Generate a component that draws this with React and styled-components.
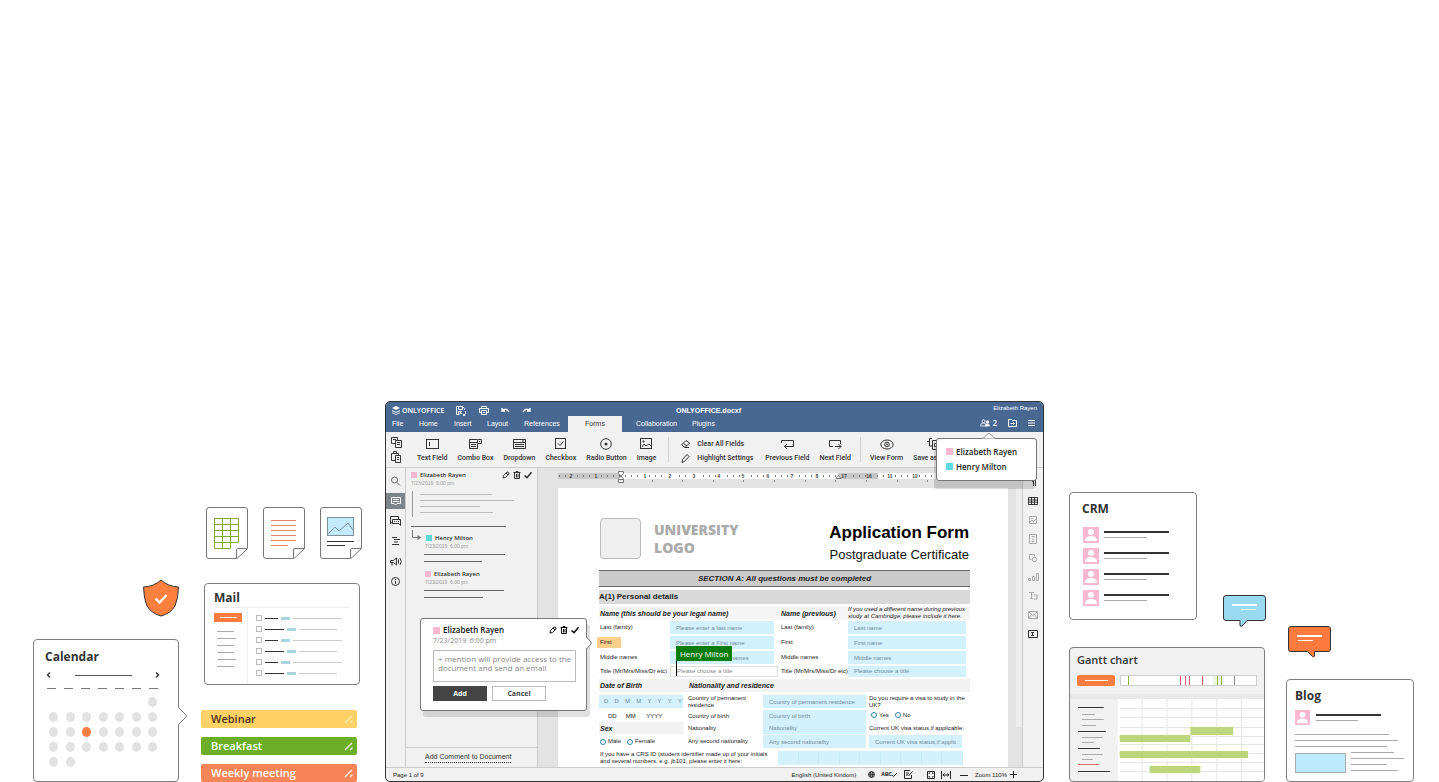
import React from "react";
import styled, { createGlobalStyle } from "styled-components";

const ui = `"Open Sans", "Noto Sans", sans-serif`;
const office = `"Liberation Sans", Arial, sans-serif`;
const toolFont = `Roboto, "Liberation Sans", sans-serif`;

const GlobalStyle = createGlobalStyle`
  * { box-sizing: border-box; }
  body { margin: 0; background: #fff; font-family: ${ui}; color: #333; }
  button, input, select { font: inherit; color: inherit; margin: 0; padding: 0; border: 0; border-radius: 0; background: none; }
  button { cursor: pointer; }
  a { color: inherit; text-decoration: none; }
  svg { display: block; flex: none; overflow: visible; }
  h2, h3, p { margin: 0; }
`;

/* ---------- shared pieces ---------- */

const Page = styled.main`
  min-height: 100vh;
  display: flex;
  align-items: flex-end;
  padding: 0 25px 0 33px;
  overflow: hidden;
`;

const Column = styled.div`
  flex: none;
  display: flex;
  flex-direction: column;
  width: ${(p) => p.$width}px;
  margin-right: ${(p) => p.$gap || 0}px;
`;

const Card = styled.section`
  position: relative;
  background: #fff;
  border: 1px solid #7f7f7f;
  border-radius: 4px;
`;

const CardTitle = styled.h2`
  font: 700 12px/16px ${ui};
  color: #333;
`;

const Line = styled.span`
  display: block;
  flex: none;
  width: ${(p) => p.$w}px;
  height: ${(p) => p.$h || 1}px;
  background: ${(p) => p.$c || "#aaa"};
`;

const Swatch = styled.span`
  flex: none;
  width: ${(p) => p.$size || 6}px;
  height: ${(p) => p.$size || 6}px;
  background: ${(p) => p.$c};
`;

const pink = "#f9b8d0";
const teal = "#5fd9de";

function Icon({ w = 14, h = 14, sw = 1, fill = "none", children }) {
  return (
    <svg width={w} height={h} viewBox={`0 0 ${w} ${h}`} fill={fill} stroke="currentColor" strokeWidth={sw} aria-hidden="true">
      {children}
    </svg>
  );
}

const EditIcon = () => (
  <Icon w={8} h={8}><path d="M1 7l.5-2.5L5 1q2-.5 2 2L3.500 6.500z M4 2l2 2" /></Icon>
);
const TrashIcon = () => (
  <Icon w={8} h={8}><path d="M.5 1.500h7M3 1V.500h2V1M1.500 2v5.500h5V2M3.500 3v3.500M5 3v3.500" /></Icon>
);
const CheckIcon = () => (
  <Icon w={8} h={8} sw={1.6}><path d="M.5 4.500L3 6.700 7.500 1.200" /></Icon>
);

const IconButton = styled.button`
  display: flex;
  align-items: center;
  justify-content: center;
`;

/* ---------- calendar ---------- */

const ShieldWrap = styled.div`
  align-self: flex-end;
  margin-bottom: 22px;
`;

const CalendarCard = styled(Card)`
  height: 143px;
  padding: 9px 17px 0 11px;
`;

const MonthNav = styled.div`
  display: flex;
  align-items: center;
  justify-content: space-between;
  height: 10px;
  margin-top: 5px;
`;

const WeekDays = styled.div`
  display: flex;
  justify-content: space-between;
  margin: 8px 3px 8px 2px;
`;

const Days = styled.div`
  display: grid;
  grid-template-columns: repeat(7, 9px);
  justify-content: space-between;
  row-gap: 5px;
  margin: 0 4px 0 4px;
`;

const Day = styled.span`
  height: 10px;
  border-radius: 50%;
  background: ${(p) => (p.$active ? "#f47d42" : p.$empty ? "none" : "#e2e2e2")};
`;

const CalendarPointer = styled.svg`
  position: absolute;
  right: -9px;
  top: 66px;
`;

function Calendar() {
  return (
    <Column $width={146} $gap={22}>
      <ShieldWrap>
        <svg width="36" height="38" viewBox="0 0 36 38">
          <path d="M18 1q7 6.500 17.500 7-.2 11-3.500 19-4.500 7.500-14 10-9.500-2.500-14-10Q.7 19 .5 8 11 7.500 18 1z" fill="#ff7f3f" stroke="#333" />
          <path d="M12.500 19.500l4 4 7-7.500" fill="none" stroke="#fff" strokeWidth="2.400" />
        </svg>
      </ShieldWrap>
      <CalendarCard>
        <CardTitle>Calendar</CardTitle>
        <MonthNav>
          <IconButton aria-label="Previous month"><Icon w={7} h={8} sw={1.4}><path d="M5 1.500L2.500 4 5 6.500" /></Icon></IconButton>
          <Line $w={57} $c="#555" />
          <IconButton aria-label="Next month"><Icon w={7} h={8} sw={1.4}><path d="M2 1.500L4.500 4 2 6.500" /></Icon></IconButton>
        </MonthNav>
        <WeekDays>{[0, 1, 2, 3, 4, 5, 6].map((d) => <Line key={d} $w={9} $c="#777" />)}</WeekDays>
        <Days>
          {Array.from({ length: 30 }, (_, i) => <Day key={i} $empty={i < 6} $active={i === 16} />)}
        </Days>
        <CalendarPointer width="10" height="20" viewBox="0 0 10 20">
          <path d="M1 1L9 9q1 1 0 2L1 19" fill="#fff" stroke="#7f7f7f" />
          <path d="M.5 2v16" stroke="#fff" strokeWidth="2" />
        </CalendarPointer>
      </CalendarCard>
    </Column>
  );
}

/* ---------- files, mail, events ---------- */

const Files = styled.div`
  display: flex;
  gap: 15px;
  padding-left: 5px;
  margin-bottom: 24px;
`;

const MailCard = styled(Card)`
  margin: 0 0 25px 3px;
  height: 102px;
  padding: 6px 9px 0;
`;

const MailBody = styled.div`
  display: flex;
  border-top: 1px solid #eee;
  margin-top: 1px;
`;

const Folders = styled.div`
  display: flex;
  flex-direction: column;
  gap: 6px;
  width: 34px;
  height: 76px;
  padding-top: 5px;
  border-right: 1px solid #eee;
`;

const FolderLine = styled(Line)`
  margin-left: 3px;
`;

const Compose = styled.button`
  display: flex;
  align-items: center;
  justify-content: center;
  width: 28px;
  height: 9px;
  margin-bottom: 3px;
  background: #ff7a3d;
`;

const Messages = styled.div`
  display: flex;
  flex-direction: column;
  gap: 5px;
  padding: 7px 0 0 8px;
`;

const Message = styled.div`
  display: flex;
  align-items: center;
  gap: 3px;
`;

const MailCheck = styled.input`
  appearance: none;
  width: 6px;
  height: 6px;
  border: 1px solid #bbb;
`;

const Event = styled.div`
  width: 156px;
  height: 18px;
  margin-bottom: ${(p) => (p.$last ? 0 : 9)}px;
  padding: 0 3px 0 10px;
  border-radius: 2px;
  display: flex;
  align-items: center;
  justify-content: space-between;
  font: 600 11px/18px ${ui};
  background: ${(p) => p.$bg};
  color: ${(p) => p.$color || "#fff"};
`;

function FileSheet({ children }) {
  return (
    <svg width="42" height="52" viewBox="0 0 42 52" fill="none">
      <path d="M30.500 51.500H3q-2.500 0-2.500-2.500V3Q.5.5 3 .5h36q2.500 0 2.500 2.500v38.500l-10.500 10zM30.500 51V43q0-1.500 1.500-1.500h9.500" fill="#fff" stroke="#777" />
      {children}
    </svg>
  );
}

const messages = [
  [13, 9, 49], [19, 9, 38], [13, 9, 49], [19, 9, 38], [13, 9, 49], [19, 9, 38],
];

function Grip({ faint }) {
  return (
    <Icon w={10} h={10}>
      <path d="M1 9l7-7M6 9l2.500-2.500" stroke={faint ? "#ffecae" : "#fff"} strokeWidth="1.200" />
    </Icon>
  );
}

function MailColumn() {
  return (
    <Column $width={159} $gap={25}>
      <Files>
        <FileSheet>
          <path d="M8.500 11.500h24v24h-8v6h-16zM8.500 17.500h24M8.500 23.500h24M8.500 29.500h24M8.500 35.500h16M16.500 11.500v30M24.500 11.500v24" stroke="#7fae2f" />
        </FileSheet>
        <FileSheet>
          <path d="M8 13.500h25M8 18.500h25M8 23.500h25M8 28.500h25M8 33.500h25M8 38.500h17" stroke="#ea845c" />
        </FileSheet>
        <FileSheet>
          <rect x="7.500" y="10.500" width="26" height="18" fill="#c2eafb" stroke="#7f9098" />
          <path d="M8 27l7-7 4 4 9-8 5 7" stroke="#7f9098" />
          <path d="M7 34.500h27M7 38.500h18" stroke="#333" />
        </FileSheet>
      </Files>
      <MailCard>
        <CardTitle>Mail</CardTitle>
        <MailBody>
          <Folders>
            <Compose aria-label="Compose"><Line $w={17} $c="#fff" /></Compose>
            {[17, 19, 17, 17, 19, 17].map((w, i) => <FolderLine key={i} $w={w} />)}
          </Folders>
          <Messages>
            {messages.map(([a, b, c], i) => (
              <Message key={i}>
                <MailCheck type="checkbox" aria-label={`Select message ${i + 1}`} />
                <Line $w={a} $c="#333" />
                <Line $w={b} $h={3} $c="#a9d5e1" />
                <Line $w={c} $c="#ccc" />
              </Message>
            ))}
          </Messages>
        </MailBody>
      </MailCard>
      <Event $bg="#ffd166" $color="#50331d">Webinar<Grip faint /></Event>
      <Event $bg="#6cae25">Breakfast<Grip /></Event>
      <Event $bg="#f88557" $last>Weekly meeting<Grip /></Event>
    </Column>
  );
}

/* ---------- editor frame ---------- */

const EditorFrame = styled.section`
  position: relative;
  flex: 1;
  min-width: 0;
  margin-right: 25px;
  border: 1px solid #333;
  border-radius: 5px;
  background: #f1f1f1;
  font: 400 7px/10px ${office};
  color: #333;
`;

const Header = styled.header`
  background: #486892;
  border-radius: 4px 4px 0 0;
  color: #fff;
  height: 30px;
`;

const TitleRow = styled.div`
  display: grid;
  grid-template-columns: 1fr auto 1fr;
  align-items: center;
  height: 14px;
  padding: 3px 6px 0;
`;

const TitleLeft = styled.div`
  display: flex;
  align-items: center;
`;

const Brand = styled.strong`
  font: 600 7px/10px ${ui};
  margin: 0 12px 0 2px;
`;

const QuickButton = styled(IconButton)`
  height: 10px;
  margin-right: 12px;
`;

const FileName = styled.strong`
  font: 700 7px/10px ${office};
  padding-right: 12px;
`;

const UserName = styled.span`
  justify-self: end;
  align-self: start;
  font: 400 6px/7px ${office};
`;

const TabRow = styled.nav`
  display: flex;
  align-items: stretch;
  height: 16px;
  padding: 0 8px 0 6px;
`;

const Tab = styled.button`
  width: ${(p) => p.$w}px;
  text-align: left;
  line-height: 14px;
  padding-bottom: 1px;
  color: ${(p) => (p.$active ? "#333" : "#fff")};
  background: ${(p) => (p.$active ? "#f1f1f1" : "none")};
  ${(p) => p.$active && "text-align: center; margin-right: 14px;"}
`;

const TabActions = styled.div`
  display: flex;
  align-items: center;
  gap: 11px;
  margin-left: auto;
  padding-bottom: 2px;
`;

const Collaborators = styled.button`
  display: flex;
  align-items: center;
  gap: 2px;
  font: 600 8px/12px ${ui};
`;

const Toolbar = styled.div`
  display: flex;
  align-items: stretch;
  height: 36px;
  padding: 0 0 0 5px;
  border-bottom: 1px solid #cbcbcb;
  overflow: hidden;
`;

const ClipTools = styled.div`
  display: flex;
  flex: none;
  flex-direction: column;
  align-items: flex-start;
  gap: 3px;
  padding: 4px 0;
  width: 26px;
`;

const ToolGroup = styled.div`
  display: flex;
  gap: 10px;
  padding-top: 6px;
`;

const Tool = styled.button`
  display: flex;
  flex-direction: column;
  align-items: center;
  gap: 3px;
  height: 26px;
  white-space: nowrap;
  font: 500 7px/10px ${toolFont};
  color: #333;
`;

const ToolStack = styled.div`
  display: flex;
  flex-direction: column;
  gap: 4px;
  padding: 7px 12px 0 0;
`;

const StackTool = styled.button`
  display: flex;
  align-items: center;
  gap: 7px;
  height: 10px;
  white-space: nowrap;
  font: 500 7px/10px ${toolFont};
  color: #333;
`;

const ToolDivider = styled.span`
  flex: none;
  width: 1px;
  margin: 5px ${(p) => p.$m}px;
  background: #d4d4d4;
`;

const Workspace = styled.div`
  display: flex;
`;

/* ---------- comments ---------- */

const Rail = styled.nav`
  flex: none;
  width: ${(p) => (p.$right ? 21 : 20)}px;
  display: flex;
  flex-direction: column;
  padding-top: ${(p) => (p.$right ? 4 : 3)}px;
  border-${(p) => (p.$right ? "left" : "right")}: 1px solid #cbcbcb;
`;

const RailButton = styled(IconButton)`
  height: ${(p) => p.$h}px;
  color: ${(p) => (p.$active ? "#fff" : p.$muted ? "#aaa" : "#333")};
`;

const ActiveTile = styled.span`
  display: flex;
  align-items: center;
  justify-content: center;
  width: 100%;
  height: 16px;
  background: #7d8588;
`;

const Comments = styled.aside`
  flex: none;
  width: 132px;
  border-right: 1px solid #cbcbcb;
  display: flex;
  flex-direction: column;
  font-family: ${ui};
`;

const Thread = styled.div`
  padding: 2px 5px 0 5px;
`;

const Author = styled.div`
  display: flex;
  align-items: center;
  gap: 3px;
  font: 600 ${(p) => (p.$big ? 8 : 6)}px/10px ${ui};
  color: ${(p) => (p.$big ? "#111" : "#333")};
  margin-left: ${(p) => p.$indent || 0}px;
`;

const Stamp = styled.div`
  font: 400 5px/7px ${office};
  color: #999;
`;

const Actions = styled.span`
  display: flex;
  gap: 3px;
  margin-left: auto;
  margin-right: ${(p) => (p.$flush ? -4 : 0)}px;
`;

const Quote = styled.div`
  display: flex;
  flex-direction: column;
  gap: 5px;
  margin: 4px 0 9px 1px;
  padding: 3px 0 4px 7px;
  border-left: 1px solid #999;
`;

const Reply = styled.div`
  position: relative;
  display: flex;
  flex-direction: column;
  gap: 4px;
  margin: 6px 0 7px 13px;
`;

const ReplyLines = styled.div`
  display: flex;
  flex-direction: column;
  gap: 6px;
`;

const ReplyArrow = styled.svg`
  position: absolute;
  left: -13px;
  top: -4px;
`;

const ReplyHead = styled.div`
  padding-left: 1px;
`;

const CommentFooter = styled.div`
  margin-top: auto;
  height: 20px;
  padding: 4px 0 0 19px;
  border-top: 1px solid #cbcbcb;
`;

const AddLink = styled.a`
  display: block;
  width: fit-content;
  font: 400 7px/10px ${office};
  border-bottom: 1px dotted #333;
`;

const CommentPopup = styled.section`
  position: absolute;
  left: 34px;
  top: 216px;
  width: 167px;
  height: 93px;
  padding: 6px 11px 0 12px;
  background: #fff;
  border: 1px solid #777;
  border-radius: 3px;
  box-shadow: 3px 6px 0 rgba(0, 0, 0, 0.12);
  font: 400 7px/12px ${ui};
  color: #888;
`;

const PopupPointer = styled.svg`
  position: absolute;
  right: -6px;
  top: 17px;
`;

const MentionBox = styled.textarea`
  display: block;
  width: 143px;
  height: 32px;
  margin-top: 3px;
  padding: 3px 0 3px 4px;
  border: 1px solid #bbb;
  border-radius: 0;
  resize: none;
  overflow: hidden;
  font: 400 8px/9px ${ui};
  background: #fff;
  &::placeholder { color: #888; opacity: 1; }
`;

const PopupButtons = styled.div`
  display: flex;
  gap: 5px;
  margin-top: 4px;
`;

const PopupButton = styled.button`
  width: 54px;
  height: 15px;
  font: 700 7px/13px ${ui};
  border: 1px solid ${(p) => (p.$primary ? "#444" : "#bbb")};
  background: ${(p) => (p.$primary ? "#444" : "#fff")};
  color: ${(p) => (p.$primary ? "#fff" : "#444")};
`;

const UsersPopover = styled.div`
  position: absolute;
  right: 6px;
  top: 36px;
  width: 101px;
  height: 43px;
  padding: 5px 9px;
  background: #fff;
  border: 1px solid #777;
  border-radius: 3px;
  box-shadow: -2px 8px 0 rgba(0, 0, 0, 0.14);
`;

const UserItem = styled.div`
  display: flex;
  align-items: center;
  gap: 3px;
  height: 15px;
  font: 600 8px/15px ${ui};
  color: #222;
`;

const PopoverPointer = styled.svg`
  position: absolute;
  left: 46px;
  top: -6px;
`;

/* ---------- document ---------- */

const DocArea = styled.div`
  flex: 1;
  min-width: 0;
  background: #e3e3e3;
  display: grid;
  grid-template-columns: 20px minmax(0, 1fr) 8px 6px;
`;

const RulerBar = styled.div`
  grid-column: 2 / 4;
  height: 20px;
  padding-top: 4px;
  overflow: hidden;
`;

const Scrollbar = styled.div`
  grid-column: 4;
  grid-row: 2;
  background: #ededed;
  margin-bottom: 40px;
`;

const Sheet = styled.article`
  grid-column: 2;
  background: #fff;
  padding: 30px 38px 2px 41px;
  font: 400 6px/7px ${office};
  color: #222;
`;

const DocHead = styled.div`
  display: flex;
  align-items: flex-start;
  height: 41px;
  margin-bottom: 11px;
`;

const LogoBox = styled.div`
  width: 41px;
  height: 41px;
  margin: 0 13px 0 1px;
  background: #efefef;
  border: 1px solid #bbb;
  border-radius: 4px;
`;

const LogoText = styled.div`
  font: 800 14px/18px ${ui};
  color: #aaa;
  padding-top: 3px;
`;

const FormTitle = styled.div`
  margin-left: auto;
  text-align: right;
  white-space: nowrap;
  padding-right: 1px;
  h2 { font: 700 17px/24px ${office}; color: #000; padding-top: 3px; }
  p { font: 400 13px/20px ${office}; color: #111; }
`;

const SectionBar = styled.h3`
  height: 17px;
  margin-bottom: 3px;
  border: solid #666;
  border-width: 1px 0;
  background: #cacaca;
  font: italic 700 8px/15px ${office};
  text-align: center;
`;

const SubBar = styled.h3`
  height: 14px;
  margin-bottom: 2px;
  background: #d9d9d9;
  font: 700 8px/14px ${office};
`;

const Columns = styled.div`
  display: grid;
  grid-template-columns: 71fr 110fr 68fr 122fr;
  align-items: center;
  height: ${(p) => p.$h || 15}px;
`;

const Heading = styled.div`
  grid-column: span ${(p) => p.$span || 1};
  font: italic 700 7px/13px ${office};
  white-space: nowrap;
  padding-left: 1px;
`;

const NameHead = styled(Columns)`
  background: #f5f5f5;
`;

const SmallNote = styled.em`
  font: italic 400 6px/7px ${office};
  white-space: nowrap;
`;

const Label = styled.label`
  white-space: nowrap;
  padding-left: 1px;
`;

const Mark = styled.span`
  display: inline-block;
  width: 24px;
  height: 11px;
  line-height: 11px;
  margin-left: -3px;
  padding-left: 3px;
  background: #fdcf8d;
`;

const fieldStyle = `
  display: block;
  background: #d3f0fd;
  padding: 0 6px;
  font: 400 6px/12px ${office};
  color: #6f8d9b;
`;

const Field = styled.input`
  ${fieldStyle}
  width: calc(100% - ${(p) => p.$inset || 0}px);
  height: ${(p) => p.$h || 13}px;
  &::placeholder { color: #6f8d9b; opacity: 1; }
`;

const Choice = styled.select`
  ${fieldStyle}
  appearance: none;
  width: calc(100% - ${(p) => p.$inset || 0}px);
  height: 11px;
  line-height: 9px;
  ${(p) => p.$open && "background: #fff; border: 1px solid #ddd; color: #888;"}
`;

const Anchor = styled.div`
  position: relative;
`;

const CursorTag = styled.span`
  position: absolute;
  left: 6px;
  top: -20px;
  height: 15px;
  padding: 0 4px;
  background: #0b7d0b;
  color: #fff;
  font: 400 8px/15px ${ui};
  white-space: nowrap;
`;

const Caret = styled.span`
  position: absolute;
  left: 6px;
  top: -5px;
  width: 1px;
  height: 15px;
  background: #000;
`;

const BirthBar = styled.div`
  display: grid;
  grid-template-columns: 89fr 282fr;
  height: 13px;
  margin: 2px 0 3px;
  background: #f2f2f2;
`;

const Details = styled.div`
  display: grid;
  grid-template-columns: 84fr 74fr 103fr 101fr;
  column-gap: 3px;
  height: 53px;
  margin-bottom: 3px;
`;

const Stack = styled.div`
  display: flex;
  flex-direction: column;
  min-width: 0;
`;

const Cell = styled.div`
  height: ${(p) => p.$h}px;
  display: flex;
  align-items: center;
  gap: ${(p) => p.$gap || 0}px;
  padding-left: ${(p) => p.$pad || 0}px;
  white-space: ${(p) => (p.$wrap ? "normal" : "nowrap")};
  background: ${(p) => p.$bg || "none"};
  margin-bottom: ${(p) => p.$mb || 0}px;
`;

const DateBox = styled(Cell)`
  justify-content: space-between;
  padding: 0 1px 0 5px;
  color: #6f8d9b;
`;

const RadioLabel = styled.label`
  display: flex;
  align-items: center;
  gap: 2px;
`;

const Radio = styled.input`
  appearance: none;
  width: 6px;
  height: 6px;
  border: 1px solid #2f86ad;
  border-radius: 50%;
`;

const CrsRow = styled.div`
  display: grid;
  grid-template-columns: 179fr 185fr 7fr;
  align-items: center;
`;

const CrsCells = styled.div`
  display: grid;
  grid-template-columns: repeat(9, 1fr);
  height: 14px;
  background: #d3f0fd;
`;

const CrsCell = styled.span`
  border-right: 1px solid #c6eaf8;
`;

const StatusBar = styled.footer`
  display: flex;
  align-items: center;
  height: 14px;
  padding: 0 26px 0 7px;
  border-top: 1px solid #cbcbcb;
  font: 400 6px/12px ${office};
  color: #222;
`;

const StatusTools = styled.div`
  margin-left: auto;
  display: flex;
  align-items: center;
  gap: 7px;
`;

const StatusGroup = styled.span`
  display: flex;
  align-items: center;
  gap: ${(p) => p.$gap || 6}px;
  padding-right: ${(p) => p.$end || 0}px;
`;

const Spell = styled.span`
  font: 700 6px/12px "Liberation Mono", monospace;
  display: flex;
  align-items: center;
`;

function Ruler() {
  const labels = [[13, "2"], [38, "1"], [87, "1"], [112, "2"], [136, "3"], [161, "4"], [185, "5"], [210, "6"], [234, "7"], [259, "8"], [286, "17"], [311, "16"], [332, "11"], [357, "12"], [381, "13"], [406, "14"], [430, "15"]];
  const ticks = [];
  for (let x = 1; x < 450; x += 6) {
    if (!labels.some(([l]) => Math.abs(l - x) < 4)) ticks.push(x);
  }
  return (
    <svg width="450" height="14" viewBox="0 0 450 14">
      <rect y="1" width="450" height="6" fill="#fff" />
      <rect y="1" width="63" height="6" fill="#c6c6c6" />
      <rect x="280" y="1" width="40" height="6" fill="#c6c6c6" />
      {ticks.map((x) => <path key={x} d={`M${x + 0.5} 3v2`} stroke="#777" />)}
      {labels.map(([x, t]) => (
        <text key={x} x={x} y="6" textAnchor="middle" fontSize="5" fontWeight="700" fill="#444">{t}</text>
      ))}
      {[94, 124, 155, 185, 216, 247, 277, 308, 339, 369].map((x) => <path key={x} d={`M${x}.5 8v2`} stroke="#888" />)}
      <path d="M60.500-.5h5v2L63 4l-2.500-2.500zM63 4l2.500 2.500v4h-5v-4z M60.500 7.500h5" fill="#fff" stroke="#777" />
      <path d="M278 6.500l2.500-3 2.500 3z" fill="#fff" stroke="#777" />
    </svg>
  );
}

const tools = [
  ["Text Field", <Icon key="i" w={13} h={12}><rect x=".5" y="1.500" width="12" height="9" /><path d="M3.500 4v4" /></Icon>],
  ["Combo Box", <Icon key="i" w={13} h={12}><path d="M8 1.500H.5v9h8V6M.5 4.500h8M2 6.500h5M2 8.500h5M8.500 1.500h4v4h-4zM10 3.500h1" /></Icon>],
  ["Dropdown", <Icon key="i" w={13} h={12}><path d="M.5 1.500h12v9H.500zM.5 4.500h12M2 6.500h9M2 8.500h9M9 3h2" /></Icon>],
  ["Checkbox", <Icon key="i" w={11} h={12}><rect x=".5" y=".5" width="10" height="10" /><path d="M3 5.500L5 7.500 8.500 3.500" /></Icon>],
  ["Radio Button", <Icon key="i" w={12} h={12}><circle cx="6" cy="6" r="5.300" /><circle cx="6" cy="6" r="1.500" fill="currentColor" stroke="none" /></Icon>],
  ["Image", <Icon key="i" w={12} h={12}><rect x=".5" y=".5" width="11" height="10" /><path d="M2 9l2-3 2 2 3-2 2 2" /><circle cx="3.500" cy="3.500" r=".7" /></Icon>],
];

const leftRail = [
  <Icon key="0" w={9} h={10}><circle cx="3.500" cy="4" r="3" stroke="#666" /><path d="M5.800 6.300L9 9.500" stroke="#666" /></Icon>,
  <Icon key="1" w={10} h={9}><path d="M.5.500h9v6H6L4.500 8 3 6.500H.500zM2 2.500h6M2 4.500h6" /></Icon>,
  <Icon key="2" w={11} h={10}><path d="M2.500 6.500H1.500L.500 8V.500h8V3M2.500 3.500h8v6L9 7.500H2.500zM4 5.500h1M6 5.500h1M8 5.500h1" /></Icon>,
  <Icon key="3" w={8} h={8}><path d="M0 .5h5M2 2.500h6M2 5h4M0 7.500h7" /></Icon>,
  <Icon key="4" w={12} h={9}><path d="M.5 3.500h3l3-2.500v7l-3-2.500h-3zM2 6v2.500M8.500 2.500v4M10 1q2.500 3.500 0 7" /></Icon>,
  <Icon key="5" w={9} h={9}><circle cx="4.500" cy="4.500" r="4" /><path d="M4.500 4v3M4.500 2v1" /></Icon>,
];

const rightRail = [
  <Icon key="0" w={7} h={8}><path d="M3.500 0v8M5.500 0v8M7 .5H3q-3 2 .5 3.500" /></Icon>,
  <Icon key="1" w={10} h={8}><path d="M.5.500h9v7h-9zM.5 3h9M.5 5.200h9M3.500.500v7M6.500.500v7" /></Icon>,
  <Icon key="2" w={8} h={8}><path d="M.5.500h7v7h-7zM1 6l2-2 1.500 1.500L7 3M3 2v1" /></Icon>,
  <Icon key="3" w={8} h={10}><path d="M.5.500h7v9h-7zM2.500 2.500h3M3 5h2M2.500 7.500h3" /></Icon>,
  <Icon key="4" w={8} h={8}><path d="M2.500 5.500h-2v-5h5v2" /><circle cx="5.500" cy="5.500" r="2.200" /></Icon>,
  <Icon key="5" w={11} h={8}><path d="M.5 5.500h2v2h-2zM4.500 3.500h2v4h-2zM8.500.500h2v7h-2z" /></Icon>,
  <Icon key="6" w={8} h={8}><path d="M0 .5h5M2.500.500v6M5 3h3v4H4.500M1 6.500h3" /></Icon>,
  <Icon key="7" w={10} h={8}><path d="M.5.500h9v7h-9zM.5.500L5 4.500 9.500.500M.5 7.500l3-4M9.500 7.500l-3-4" /></Icon>,
  <Icon key="8" w={10} h={8}><path d="M.5.500h9v7h-9zM3 2.500h3M4.500 2.500v3M3 5.500h3" /></Icon>,
];

const leftRailNames = ["Search", "Comments", "Chat", "Navigation", "Feedback", "About"];
const rightRailNames = ["Paragraph", "Table", "Image", "Header and footer", "Shape", "Chart", "Text art", "Mail merge", "Form"];

function HeaderBar() {
  return (
    <Header>
      <TitleRow>
        <TitleLeft>
          <Icon w={8} h={9} sw={0}>
            <path d="M4 0l4 2-4 2-4-2zM0 4l4 2 4-2v1L4 7 0 5zM0 6.200l4 2 4-2v.8L4 9 0 7z" fill="#fff" />
          </Icon>
          <Brand>ONLYOFFICE</Brand>
          <QuickButton aria-label="Save"><Icon w={11} h={10}><path d="M3.500 8.500h-3v-8h6l2 2V4M2.500 1v2.500h4V1M2.500 8V5.500h3M5 5.500l-1 2h2M9.500 5q1.500 3-2 4.500M9 9.500H7.500V8" /></Icon></QuickButton>
          <QuickButton aria-label="Print"><Icon w={10} h={9}><path d="M2.500 2.500v-2h5v2M2 6.500H.500v-4h9v4H8M2.500 4.500h5v4h-5zM4 6.500h2" /></Icon></QuickButton>
          <QuickButton aria-label="Undo"><Icon w={9} h={7} sw={1.4}><path d="M1 1v3h3M1 4Q5 0 8 5" /></Icon></QuickButton>
          <QuickButton aria-label="Redo"><Icon w={9} h={7} sw={1.4}><path d="M8 1v3H5M8 4Q4 0 1 5" /></Icon></QuickButton>
        </TitleLeft>
        <FileName>ONLYOFFICE.docxf</FileName>
        <UserName>Elizabeth Rayen</UserName>
      </TitleRow>
      <TabRow>
        <Tab $w={27}>File</Tab>
        <Tab $w={35}>Home</Tab>
        <Tab $w={33}>Insert</Tab>
        <Tab $w={37}>Layout</Tab>
        <Tab $w={44}>References</Tab>
        <Tab $w={54} $active>Forms</Tab>
        <Tab $w={56}>Collaboration</Tab>
        <Tab $w={30}>Plugins</Tab>
        <TabActions>
          <Collaborators aria-label="2 users editing">
            <Icon w={10} h={8} sw={0.8}><circle cx="3.500" cy="2.200" r="1.500" /><path d="M.5 7q0-3 3-3t2.500 3z" /><circle cx="7.500" cy="3" r="1.300" fill="#fff" /><path d="M5.500 7q0-2 2-2T9.500 7z" fill="#fff" /></Icon>
            2
          </Collaborators>
          <IconButton aria-label="Open file location"><Icon w={9} h={8}><path d="M.5.500h3l1 1h4v6h-8zM2.500 4.500h4M5 3l1.500 1.500L5 6" /></Icon></IconButton>
          <IconButton aria-label="Menu"><Icon w={7} h={8}><path d="M0 1.500h7M0 4h7M0 6.500h7" /></Icon></IconButton>
        </TabActions>
      </TabRow>
    </Header>
  );
}

function ToolbarRow() {
  return (
    <Toolbar>
      <ClipTools>
        <IconButton aria-label="Copy"><Icon w={12} h={12}><path d="M4 7.500H.500v-6h6V4M2 3.500h3M4.500 4.500h6v7h-6zM6 6.500h3M6 8.500h3" /></Icon></IconButton>
        <IconButton aria-label="Paste"><Icon w={12} h={12}><path d="M4 9.500H.500v-7h7V4M2.500 2V.500h3V2M4.500 4.500h5v7h-5zM6 6.500h2M6 8.500h2" /></Icon></IconButton>
      </ClipTools>
      <ToolGroup>
        {tools.map(([name, icon]) => <Tool key={name}>{icon}{name}</Tool>)}
      </ToolGroup>
      <ToolDivider $m={12} />
      <ToolStack>
        <StackTool><Icon w={9} h={8}><path d="M.5 5L5 .5 8.500 3 4 7.500zM2.500 3.500L6 6M4 7.500h4" /></Icon>Clear All Fields</StackTool>
        <StackTool><Icon w={9} h={9}><path d="M1 8.500l.5-3L6 .5l2 2-4.500 5z" /></Icon>Highlight Settings</StackTool>
      </ToolStack>
      <ToolGroup>
        <Tool><Icon w={13} h={12}><path d="M.5 5V2.500h12v6H3.500M6 6L3.500 8.500 6 11" /></Icon>Previous Field</Tool>
        <Tool><Icon w={13} h={12}><path d="M4 8.500H.500v-6h11V6M6 8.500h6M9.500 6l2.500 2.500L9.500 11" /></Icon>Next Field</Tool>
      </ToolGroup>
      <ToolDivider $m={9} />
      <ToolGroup>
        <Tool><Icon w={14} h={12}><ellipse cx="7" cy="6.500" rx="6.200" ry="4.500" /><circle cx="7" cy="6.500" r="2.300" /><circle cx="7" cy="6.500" r=".6" /></Icon>View Form</Tool>
        <Tool><Icon w={13} h={12}><path d="M5 .5H2.500V4M0 3.500h3M2.500 3v5H5M5.500 2.500h7v9h-7zM7.500 5.500h3v3h-3z" /></Icon>Save as form</Tool>
      </ToolGroup>
    </Toolbar>
  );
}

function CommentActions({ flush }) {
  return (
    <Actions $flush={flush}>
      <IconButton aria-label="Edit"><EditIcon /></IconButton>
      <IconButton aria-label="Delete"><TrashIcon /></IconButton>
      <IconButton aria-label="Resolve"><CheckIcon /></IconButton>
    </Actions>
  );
}

function CommentsPanel() {
  return (
    <Comments>
      <Thread>
        <Author><Swatch $c={pink} />Elizabeth Rayen<CommentActions /></Author>
        <Stamp>7/23/2019&nbsp; 6:00 pm</Stamp>
        <Quote>
          <Line $w={72} $c="#bbb" /><Line $w={94} $c="#bbb" /><Line $w={60} $c="#bbb" /><Line $w={73} $c="#bbb" />
        </Quote>
        <Line $w={95} $c="#666" />
        <Reply>
          <ReplyArrow width="11" height="12" viewBox="0 0 11 12">
            <path d="M1.500 1v7.500H8" fill="none" stroke="#777" /><path d="M6.500 6l4 2.500-4 2.500z" fill="#777" />
          </ReplyArrow>
          <ReplyHead>
            <Author $indent={1}><Swatch $c={teal} />Henry Milton</Author>
            <Stamp>7/23/2019&nbsp; 6:00 pm</Stamp>
          </ReplyHead>
          <ReplyLines><Line $w={81} $c="#666" /><Line $w={58} $c="#666" /></ReplyLines>
        </Reply>
        <Reply>
          <ReplyHead>
            <Author><Swatch $c={pink} />Elizabeth Rayen</Author>
            <Stamp>7/23/2019&nbsp; 6:00 pm</Stamp>
          </ReplyHead>
          <ReplyLines><Line $w={80} $c="#666" /><Line $w={59} $c="#666" /></ReplyLines>
        </Reply>
      </Thread>
      <CommentFooter><AddLink href="#comment">Add Comment to Document</AddLink></CommentFooter>
    </Comments>
  );
}

function NameRow({ left, mark, leftHint, right, rightHint }) {
  return (
    <Columns>
      <Label htmlFor={`a-${left}`}>{mark ? <Mark>{left}</Mark> : left}</Label>
      <Field id={`a-${left}`} placeholder={leftHint} $inset={6} />
      <Label htmlFor={`b-${left}`}>{right}</Label>
      <Field id={`b-${left}`} placeholder={rightHint} $inset={4} />
    </Columns>
  );
}

function DocumentSheet() {
  return (
    <Sheet>
      <DocHead>
        <LogoBox />
        <LogoText>UNIVERSITY<br />LOGO</LogoText>
        <FormTitle><h2>Application Form</h2><p>Postgraduate Certificate</p></FormTitle>
      </DocHead>
      <SectionBar>SECTION A: All questions must be completed</SectionBar>
      <SubBar>A(1) Personal details</SubBar>
      <NameHead $h={14}>
        <Heading $span={2}>Name (this should be your legal name)</Heading>
        <Heading>Name (previous)</Heading>
        <SmallNote>If you used a different name during previous<br />study at Cambridge, please include it here.</SmallNote>
      </NameHead>
      <NameRow left="Last (family)" leftHint="Please enter a last name" right="Last (family)" rightHint="Last name" />
      <NameRow left="First" mark leftHint="Please enter a First name" right="First" rightHint="First name" />
      <NameRow left="Middle names" leftHint="Please enter middle names" right="Middle names" rightHint="Middle names" />
      <Columns $h={12}>
        <Label htmlFor="title-a">Title (Mr/Mrs/Miss/Dr etc)</Label>
        <Anchor>
          <Choice id="title-a" $open $inset={2}><option>Please choose a title</option></Choice>
          <CursorTag>Henry Milton</CursorTag>
          <Caret />
        </Anchor>
        <Label htmlFor="title-b">Title (Mr/Mrs/Miss/Dr etc)</Label>
        <Choice id="title-b" $inset={4}><option>Please choose a title</option></Choice>
      </Columns>
      <BirthBar>
        <Heading>Date of Birth</Heading>
        <Heading>Nationality and residence</Heading>
      </BirthBar>
      <Details>
        <Stack>
          <DateBox $h={13} $mb={2} $bg="#d3f0fd">{"DDMMYYYY".split("").map((c, i) => <span key={i}>{c}</span>)}</DateBox>
          <Cell $h={12} $gap={9} $pad={9}><span>DD</span><span>MM</span><span>&nbsp;YYYY</span></Cell>
          <Cell $h={12} $mb={1} $bg="#f2f2f2"><Heading>Sex</Heading></Cell>
          <Cell $h={13} $gap={6} $pad={1}>
            <RadioLabel><Radio type="radio" name="sex" />Male</RadioLabel>
            <RadioLabel><Radio type="radio" name="sex" />Female</RadioLabel>
          </Cell>
        </Stack>
        <Stack>
          <Cell as="label" htmlFor="residence" $h={13} $mb={2} $pad={2} $wrap>Country of permanent residence</Cell>
          <Cell as="label" htmlFor="birth" $h={12} $pad={2}>Country of birth</Cell>
          <Cell as="label" htmlFor="nation" $h={12} $mb={1} $pad={2}>Nationality</Cell>
          <Cell as="label" htmlFor="second" $h={13} $pad={2}>Any second nationality</Cell>
        </Stack>
        <Stack>
          <Cell $h={13} $mb={2}><Field id="residence" placeholder="Country of permanent residence" /></Cell>
          <Cell $h={12}><Field id="birth" placeholder="Country of birth" $h={12} /></Cell>
          <Cell $h={12} $mb={1}><Field id="nation" placeholder="Nationality" $h={12} /></Cell>
          <Cell $h={13}><Field id="second" placeholder="Any second nationality" /></Cell>
        </Stack>
        <Stack>
          <Cell $h={13} $wrap>Do you require a visa to study in the UK?</Cell>
          <Cell $h={14} $gap={6} $pad={2}>
            <RadioLabel><Radio type="radio" name="visa" />Yes</RadioLabel>
            <RadioLabel><Radio type="radio" name="visa" />No</RadioLabel>
          </Cell>
          <Cell as="label" htmlFor="visa-status" $h={12} $mb={1}>Current UK visa status,if applicable:</Cell>
          <Cell $h={13}><Field id="visa-status" placeholder="Current UK visa status,if applicable" $inset={8} /></Cell>
        </Stack>
      </Details>
      <CrsRow>
        <Label>If you have a CRS ID (student identifier made up of your initials<br />and several numbers, e.g. jb101, please enter it here:</Label>
        <CrsCells>{[0, 1, 2, 3, 4, 5, 6, 7, 8].map((c) => <CrsCell key={c} />)}</CrsCells>
      </CrsRow>
    </Sheet>
  );
}

function Editor() {
  return (
    <EditorFrame>
      <HeaderBar />
      <ToolbarRow />
      <Workspace>
        <Rail>
          {leftRail.map((icon, i) => (
            <RailButton key={i} $h={20} $active={i === 1} aria-label={leftRailNames[i]}>
              {i === 1 ? <ActiveTile>{icon}</ActiveTile> : icon}
            </RailButton>
          ))}
        </Rail>
        <CommentsPanel />
        <DocArea>
          <RulerBar><Ruler /></RulerBar>
          <DocumentSheet />
          <Scrollbar />
        </DocArea>
        <Rail $right>
          {rightRail.map((icon, i) => (
            <RailButton key={i} $h={19} $muted={i > 1 && i < 8} aria-label={rightRailNames[i]}>{icon}</RailButton>
          ))}
        </Rail>
      </Workspace>
      <StatusBar>
        <span>Page 1 of 9</span>
        <StatusTools>
          <StatusGroup $end={5}>English (United Kindom)</StatusGroup>
          <StatusGroup $end={6}>
            <Icon w={7} h={7} sw={0.8}><circle cx="3.500" cy="3.500" r="3" /><ellipse cx="3.500" cy="3.500" rx="1.300" ry="3" /><path d="M.5 3.500h6M1 2h5M1 5h5" /></Icon>
            <Spell>ABC<Icon w={6} h={5}><path d="M0 3l1.500 1.500L5 1" /></Icon></Spell>
            <StatusGroup $end={1}>
              <Icon w={9} h={9}><path d="M6 .5H.500v8h7V5M2 3h3M2 5h2M4.500 6L8.500 1.500" /></Icon>
            </StatusGroup>
          </StatusGroup>
          <StatusGroup $end={2}>
            <Icon w={8} h={8}><path d="M.5.500h7v7h-7zM2 3V2h1M5 2h1v1M6 5v1H5M3 6H2V5" /></Icon>
            <Icon w={10} h={8}><path d="M.5 0v8M9.500 0v8M2 4h6M3.500 2.500L2 4l1.500 1.500M6.500 2.500L8 4 6.500 5.500" /></Icon>
          </StatusGroup>
          <IconButton aria-label="Zoom out"><Icon w={8} h={8}><path d="M0 4.500h8" /></Icon></IconButton>
          <StatusGroup $gap={3}>
            <span>Zoom 110%</span>
            <IconButton aria-label="Zoom in"><Icon w={7} h={7}><path d="M0 3.500h7M3.500 0v7" /></Icon></IconButton>
          </StatusGroup>
        </StatusTools>
      </StatusBar>
      <CommentPopup>
        <Author $big><Swatch $c={pink} $size={7} />Elizabeth Rayen<CommentActions flush /></Author>
        <div>7/23/2019&nbsp; 6:00 pm</div>
        <MentionBox aria-label="Comment" placeholder="+ mention will provide access to the document and send an email" />
        <PopupButtons><PopupButton $primary>Add</PopupButton><PopupButton>Cancel</PopupButton></PopupButtons>
        <PopupPointer width="6" height="14" viewBox="0 0 6 14">
          <path d="M.5 1l4.500 5q.7 1 0 2L.500 13" fill="#fff" stroke="#777" /><path d="M0 2v10" stroke="#fff" strokeWidth="2" />
        </PopupPointer>
      </CommentPopup>
      <UsersPopover>
        <UserItem><Swatch $c={pink} $size={7} />Elizabeth Rayen</UserItem>
        <UserItem><Swatch $c={teal} $size={7} />Henry Milton</UserItem>
        <PopoverPointer width="12" height="6" viewBox="0 0 12 6">
          <path d="M0 5.500L5 .8q1-.8 2 0l5 4.700" fill="#fff" stroke="#999" />
        </PopoverPointer>
      </UsersPopover>
    </EditorFrame>
  );
}

/* ---------- CRM, Gantt, blog ---------- */

const TopRow = styled.div`
  display: flex;
  gap: 26px;
  align-items: flex-start;
  margin-bottom: 27px;
`;

const CrmCard = styled(Card)`
  flex: none;
  width: 128px;
  height: 128px;
  padding: 8px 12px;
`;

const Contacts = styled.div`
  display: flex;
  flex-direction: column;
  gap: 5px;
  margin: 10px 0 0 1px;
`;

const Contact = styled.div`
  display: flex;
  gap: 5px;
`;

const ContactLines = styled.div`
  display: flex;
  flex-direction: column;
  gap: 4px;
  padding-top: 4px;
`;

const BubbleWrap = styled.div`
  padding-top: ${(p) => p.$top || 0}px;
  margin: 0 0 ${(p) => p.$bottom || 0}px ${(p) => p.$left || 0}px;
`;

const GanttCard = styled(Card)`
  height: 135px;
  padding-top: 4px;
  background: #f1f1f1;
  overflow: hidden;
`;

const GanttTitle = styled(CardTitle)`
  font-size: 11px;
  font-weight: 600;
  padding-left: 7px;
`;

const GanttBar = styled.div`
  display: flex;
  gap: 5px;
  padding: 0 7px;
  margin: 7px 0 8px;
`;

const GanttButton = styled.button`
  display: flex;
  align-items: center;
  justify-content: center;
  width: 38px;
  height: 11px;
  border-radius: 2px;
  background: #ff7d41;
`;

const BlogCard = styled(Card)`
  height: 103px;
  padding: 8px 8px 0;
`;

const BlogAuthor = styled(Contact)`
  gap: 6px;
  margin: 6px 0 9px;
`;

const Paragraph = styled.div`
  display: flex;
  flex-direction: column;
  gap: 5px;
`;

const BlogBottom = styled.div`
  display: flex;
  gap: 5px;
  margin-top: 5px;
`;

const BlogImage = styled.div`
  width: 51px;
  height: 20px;
  margin-top: 1px;
  background: #bdeafc;
  border: 1px solid #aaa;
`;

function Avatar({ size = 16 }) {
  return (
    <svg width={size} height={size} viewBox="0 0 16 16">
      <path d="M0 0h16v16H0z" fill={pink} />
      <circle cx="8" cy="5" r="3" fill="#fff" />
      <path d="M2 14q0-5 6-5t6 5z" fill="#fff" />
    </svg>
  );
}

function Bubble({ fill, flip }) {
  return (
    <svg width="43" height="33" viewBox="0 0 43 33">
      <path
        d={flip
          ? "M3 .5h37q2.500 0 2.500 2.500v20q0 2.500-2.500 2.500H26.500V30q-.5 1.500-2 .5l-5-5H3Q.5 25.500.5 23V3Q.5.5 3 .5z"
          : "M3 .5h37q2.500 0 2.500 2.500v20q0 2.500-2.500 2.500H24l-5 5.500q-2 1-2-1v-4.500H3Q.5 25.500.5 23V3Q.5.5 3 .5z"}
        fill={fill} stroke="#333"
      />
      <path d="M9 10h25" stroke="#fff" strokeWidth="2" />
      <path d={flip ? "M10 14.500h15" : "M18 14.500h15"} stroke="#fff" />
    </svg>
  );
}

function GanttChart() {
  return (
    <svg width="100%" height="88" viewBox="0 0 195 88" preserveAspectRatio="none">
      <path d="M0 0h195v5H0z" fill="#e8e8e8" />
      <path d="M48 5h147v83H48z" fill="#fff" />
      <path d="M72.500 5v83M97.500 5v83M122.500 5v83M147.500 5v83M172.500 5v83M50 14.500h145M50 23.500h145M50 33.500h145M50 42.500h145M50 50.500h145M50 59.500h145M50 68.500h145M50 77.500h145" stroke="#e6e6e6" />
      <path d="M121 33h43v8h-43zM50 41h71v7H50zM50 57h129v7H50zM80 72h51v7H80z" fill="#bdd67b" />
      <path d="M8 13.500h26M8 37.500h28M8 54.500h22M8 77.500h32" stroke="#333" />
      <path d="M12 20.500h13M12 25.500h22M12 31.500h14M12 43.500h21M12 48.500h12M12 60.500h21M12 65.500h11" stroke="#aaa" />
      <path d="M8 70.500h21" stroke="#e06a72" />
    </svg>
  );
}

function Timeline() {
  return (
    <svg width="137" height="11" viewBox="0 0 137 11">
      <rect x=".5" y=".5" width="136" height="10" fill="#fff" stroke="#ccc" />
      <path d="M93 1h11v9H93z" fill="#eef5df" />
      <path d="M8.500 1v9M97.500 1v9M101.500 1v9" stroke="#8fb23c" />
      <path d="M60.500 1v9M65.500 1v9M69.500 1v9M82.500 1v9" stroke="#dd5f6d" />
      <path d="M114.500 1v9" stroke="#888" />
    </svg>
  );
}

function RightSide() {
  return (
    <>
      <Column $width={196} $gap={21}>
        <TopRow>
          <CrmCard>
            <CardTitle>CRM</CardTitle>
            <Contacts>
              {[0, 1, 2, 3].map((c) => (
                <Contact key={c}>
                  <Avatar />
                  <ContactLines><Line $w={65} $h={2} $c="#333" /><Line $w={43} /></ContactLines>
                </Contact>
              ))}
            </Contacts>
          </CrmCard>
          <BubbleWrap $top={103} $bottom={-8}><Bubble fill="#9adaf0" /></BubbleWrap>
        </TopRow>
        <GanttCard>
          <GanttTitle>Gantt chart</GanttTitle>
          <GanttBar>
            <GanttButton aria-label="New task"><Line $w={23} $c="#fff" /></GanttButton>
            <Timeline />
          </GanttBar>
          <GanttChart />
        </GanttCard>
      </Column>
      <Column $width={128}>
        <BubbleWrap $left={2} $bottom={20}><Bubble fill="#ff7a3d" flip /></BubbleWrap>
        <BlogCard>
          <CardTitle>Blog</CardTitle>
          <BlogAuthor>
            <Avatar size={15} />
            <ContactLines><Line $w={65} $h={2} $c="#333" /><Line $w={42} /></ContactLines>
          </BlogAuthor>
          <Paragraph><Line $w={94} /><Line $w={103} /><Line $w={92} /></Paragraph>
          <BlogBottom>
            <BlogImage />
            <Paragraph><Line $w={43} /><Line $w={53} /><Line $w={36} /><Line $w={47} /></Paragraph>
          </BlogBottom>
        </BlogCard>
      </Column>
    </>
  );
}

export default function App() {
  return (
    <>
      <GlobalStyle />
      <Page>
        <Calendar />
        <MailColumn />
        <Editor />
        <RightSide />
      </Page>
    </>
  );
}
